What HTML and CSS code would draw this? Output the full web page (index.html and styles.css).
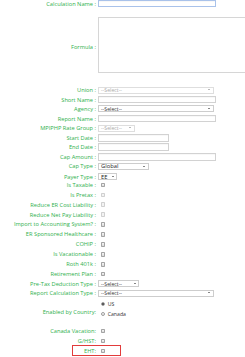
FILE: index.html
```html
<!DOCTYPE html>
<html>
<head>
<meta charset="utf-8">
<link rel="stylesheet" href="styles.css">
</head>
<body>
<div class="form">
  <div class="lbl">Calculation Name :</div>
  <div class="fld"><div class="input focus w-full"></div></div>

  <div class="lbl tall">Formula :</div>
  <div class="fld tall top"><div class="textarea"></div></div>

  <div class="lbl">Union :</div>
  <div class="fld"><div class="select disabled w-sel">--Select--<span class="arrow"></span></div></div>

  <div class="lbl">Short Name :</div>
  <div class="fld"><div class="input w-full"></div></div>

  <div class="lbl">Agency :</div>
  <div class="fld"><div class="select w-sel">--Select--<span class="arrow"></span></div></div>

  <div class="lbl">Report Name :</div>
  <div class="fld"><div class="input w-full"></div></div>

  <div class="lbl">MPIPHP Rate Group :</div>
  <div class="fld"><div class="select disabled w-mpi">--Select--<span class="arrow"></span></div></div>

  <div class="lbl">Start Date :</div>
  <div class="fld"><div class="input w-date"></div></div>

  <div class="lbl">End Date :</div>
  <div class="fld"><div class="input w-date"></div></div>

  <div class="lbl">Cap Amount :</div>
  <div class="fld"><div class="input w-full"></div></div>

  <div class="lbl">Cap Type :</div>
  <div class="fld"><div class="select big w-cap">Global<span class="arrow"></span></div></div>

  <div class="lbl">Payer Type :</div>
  <div class="fld"><div class="select big w-payer">EE<span class="arrow"></span></div></div>

  <div class="lbl">Is Taxable :</div>
  <div class="fld"><span class="check"></span></div>

  <div class="lbl">Is Pretax :</div>
  <div class="fld"><span class="check off"></span></div>

  <div class="lbl">Reduce ER Cost Liability :</div>
  <div class="fld"><span class="check off"></span></div>

  <div class="lbl">Reduce Net Pay Liability :</div>
  <div class="fld"><span class="check off"></span></div>

  <div class="lbl">Import to Accounting System? :</div>
  <div class="fld"><span class="check"></span></div>

  <div class="lbl">ER Sponsored Healthcare :</div>
  <div class="fld"><span class="check"></span></div>

  <div class="lbl">COHIP :</div>
  <div class="fld"><span class="check"></span></div>

  <div class="lbl">Is Vacationable :</div>
  <div class="fld"><span class="check"></span></div>

  <div class="lbl">Roth 401k :</div>
  <div class="fld"><span class="check"></span></div>

  <div class="lbl">Retirement Plan :</div>
  <div class="fld"><span class="check"></span></div>

  <div class="lbl">Pre-Tax Deduction Type :</div>
  <div class="fld"><div class="select w-pre">--Select--<span class="arrow"></span></div></div>

  <div class="lbl">Report Calculation Type :</div>
  <div class="fld"><div class="select w-sel">--Select--<span class="arrow"></span></div></div>

  <div class="lbl tall">Enabled by Country:</div>
  <div class="fld tall radios">
    <label class="radio-line"><span class="radio on"></span>US</label>
    <label class="radio-line"><span class="radio"></span>Canada</label>
  </div>

  <div class="lbl">Canada Vacation:</div>
  <div class="fld"><span class="check"></span></div>

  <div class="lbl">G/HST:</div>
  <div class="fld"><span class="check"></span></div>

  <div class="lbl mark">EHT:<span class="highlight"></span></div>
  <div class="fld"><span class="check"></span></div>
</div>
</body>
</html>
```

FILE: styles.css
```css
html, body {
  margin: 0;
  padding: 0;
  overflow: hidden;
  background: #ffffff;
}

body {
  font-family: "Open Sans", "DejaVu Sans", sans-serif;
  font-size: 5.7px;
  color: #333333;
}

.form {
  margin-top: -1px;
  display: grid;
  grid-template-columns: 96px 147px;
  column-gap: 2px;
  grid-template-rows:
    9px 77.5px 9.7px 9.3px 9.7px 9.6px 9.7px 9.3px 9.7px 9.5px
    10.2px 8.3px 10px 9.7px 10px 9.6px 10px 10px 10px 10px
    9.7px 10px 9.3px 8.2px 29.5px 10px 10px 10px;
  align-items: start;
}

.lbl, .fld {
  height: 9px;
  display: flex;
  align-items: center;
  white-space: nowrap;
}

.lbl {
  justify-content: flex-end;
  color: #2fb04d;
}

.lbl.tall, .fld.tall {
  height: 100%;
  align-self: stretch;
}

.fld.top {
  align-items: flex-start;
}

.input {
  box-sizing: border-box;
  height: 7.6px;
  border: 1px solid #d2d2d2;
  background: #fff;
  box-shadow: inset 0 0.5px 0.5px rgba(0,0,0,0.06);
}

.input.focus {
  border-color: #a9c2ea;
}

.w-full { width: 118px; }
.w-date { width: 71px; }

.textarea {
  box-sizing: border-box;
  margin-top: 9px;
  width: 147px;
  height: 56px;
  border: 1px solid #d6d6d6;
  border-right: none;
  background: #fff;
}

.select {
  position: relative;
  box-sizing: border-box;
  height: 7px;
  border: 1px solid #cdcdcd;
  background: #fff;
  padding-left: 2px;
  display: flex;
  align-items: center;
  color: #333;
  font-size: 5.2px;
}

.select.big {
  font-size: 5.8px;
  color: #222;
}

.select.disabled {
  border-color: #dedede;
  color: #a8a8a8;
}

.arrow {
  position: absolute;
  right: 2.6px;
  top: 50%;
  margin-top: -0.8px;
  width: 0;
  height: 0;
  border-left: 1.3px solid transparent;
  border-right: 1.3px solid transparent;
  border-top: 1.8px solid #111;
}

.select.disabled .arrow {
  border-top-color: #777;
}

.w-sel { width: 116px; }
.w-mpi { width: 37px; }
.w-cap { width: 51px; }
.w-payer { width: 19.3px; }
.w-pre { width: 41.3px; }

.check {
  box-sizing: border-box;
  display: inline-block;
  width: 4.6px;
  height: 4.6px;
  margin-left: 2.6px;
  border: 1px solid #a4a4a4;
  border-radius: 0.8px;
  background: linear-gradient(#f6f6f6, #d9d9d9);
}

.check.off {
  border-color: #d0d0d0;
  background: #f3f3f3;
}

.radios {
  flex-direction: column;
  align-items: flex-start;
  justify-content: flex-start;
  padding-top: 2.3px;
  box-sizing: border-box;
}

.radio-line {
  height: 10px;
  display: flex;
  align-items: center;
  color: #333;
  font-size: 5.2px;
}

.radio {
  box-sizing: border-box;
  width: 4.5px;
  height: 4.5px;
  margin-left: 2.5px;
  margin-right: 2.7px;
  border: 0.9px solid #9c9c9c;
  border-radius: 50%;
  background: linear-gradient(#ffffff, #e4e4e4);
  display: flex;
  align-items: center;
  justify-content: center;
}

.radio.on::after {
  content: "";
  width: 2px;
  height: 2px;
  border-radius: 50%;
  background: #333;
}

.lbl.mark {
  position: relative;
}

.highlight {
  position: absolute;
  left: 71.7px;
  top: -1.5px;
  width: 49px;
  height: 10.7px;
  box-sizing: border-box;
  border: 1.2px solid #e23b3b;
}
```
